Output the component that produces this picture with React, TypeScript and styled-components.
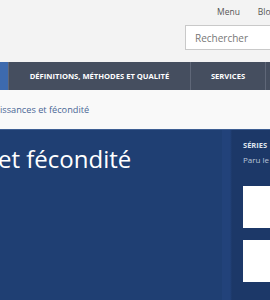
import React from "react";
import styled, { createGlobalStyle } from "styled-components";

const Global = createGlobalStyle`
  html, body { margin: 0; padding: 0; }
  body { font-family: "Open Sans", "Liberation Sans", sans-serif; background: #f3f3f3; overflow: hidden; }
`;

const Page = styled.div`
  width: 270px;
  height: 300px;
  overflow: hidden;
  display: flex;
  flex-direction: column;
`;

const Header = styled.header`
  height: 62px;
  background: #f3f3f3;
  display: flex;
  flex-direction: column;
  align-items: flex-start;
  padding-left: 185px;
  box-sizing: border-box;
`;

const TopLinks = styled.div`
  display: flex;
  gap: 18px;
  padding: 6px 0 0 32px;
  height: 25px;
  box-sizing: border-box;
`;

const TopLink = styled.a`
  font-size: 8.5px;
  color: #555;
  white-space: nowrap;
  line-height: 12px;
`;

const Search = styled.div`
  width: 100px;
  height: 25px;
  box-sizing: border-box;
  background: #fff;
  border: 1px solid #c9c9c9;
  border-right: none;
  display: flex;
  align-items: center;
  padding-left: 9px;
  font-size: 10px;
  color: #777;
`;

const Nav = styled.nav`
  height: 28px;
  background: #454e5f;
  display: flex;
  flex-shrink: 0;
`;

const NavItem = styled.div<{ $w: number; $active?: boolean }>`
  width: ${(p) => p.$w}px;
  flex-shrink: 0;
  background: ${(p) => (p.$active ? "#3d6aae" : "transparent")};
  border-right: 1px solid #5f6778;
  display: flex;
  align-items: center;
  justify-content: center;
  color: #fff;
  font-weight: 700;
  font-size: 7.6px;
  white-space: nowrap;
  text-transform: uppercase;
`;

const Breadcrumb = styled.div`
  height: 39px;
  background: #f9f9f9;
  border-bottom: 1px solid #3e5f93;
  display: flex;
  align-items: center;
  font-size: 9.2px;
  color: #4a6796;
  white-space: nowrap;
  flex-shrink: 0;
`;

const Hero = styled.section`
  flex: 1;
  display: flex;
  background: #1f3f73;
`;

const Main = styled.div`
  width: 222px;
  flex-shrink: 0;
`;

const Title = styled.h1`
  margin: 12px 0 0 -2px;
  font-size: 24px;
  font-weight: 500;
  line-height: 33px;
  color: #fff;
  white-space: nowrap;
`;

const Aside = styled.aside`
  flex: 1;
  background: linear-gradient(to right, #22427a 0, #22427a 8px, #1c3868 10px);
  padding: 9px 0 0 21px;
  display: flex;
  flex-direction: column;
`;

const Label = styled.div`
  font-size: 7.5px;
  font-weight: 700;
  color: #dfe5ee;
  line-height: 12px;
  white-space: nowrap;
`;

const Meta = styled.div`
  font-size: 8px;
  color: #b9c5d9;
  line-height: 12px;
  margin-top: 3px;
  white-space: nowrap;
`;

const Cards = styled.div`
  margin-top: 20px;
  display: flex;
  flex-direction: column;
  gap: 12px;
`;

const Card = styled.div`
  height: 42px;
  background: #fff;
`;

export default function App() {
  return (
    <Page>
      <Global />
      <Header>
        <TopLinks>
          <TopLink>Menu</TopLink>
          <TopLink>Blog</TopLink>
        </TopLinks>
        <Search>Rechercher</Search>
      </Header>
      <Nav>
        <NavItem $w={8} $active />
        <NavItem $w={181}>Définitions, méthodes et qualité</NavItem>
        <NavItem $w={74}>Services</NavItem>
        <NavItem $w={60} />
      </Nav>
      <Breadcrumb>issances et fécondité</Breadcrumb>
      <Hero>
        <Main>
          <Title>et fécondité</Title>
        </Main>
        <Aside>
          <Label>SÉRIES</Label>
          <Meta>Paru le : 12/01/2024</Meta>
          <Cards>
            <Card />
            <Card />
          </Cards>
        </Aside>
      </Hero>
    </Page>
  );
}
